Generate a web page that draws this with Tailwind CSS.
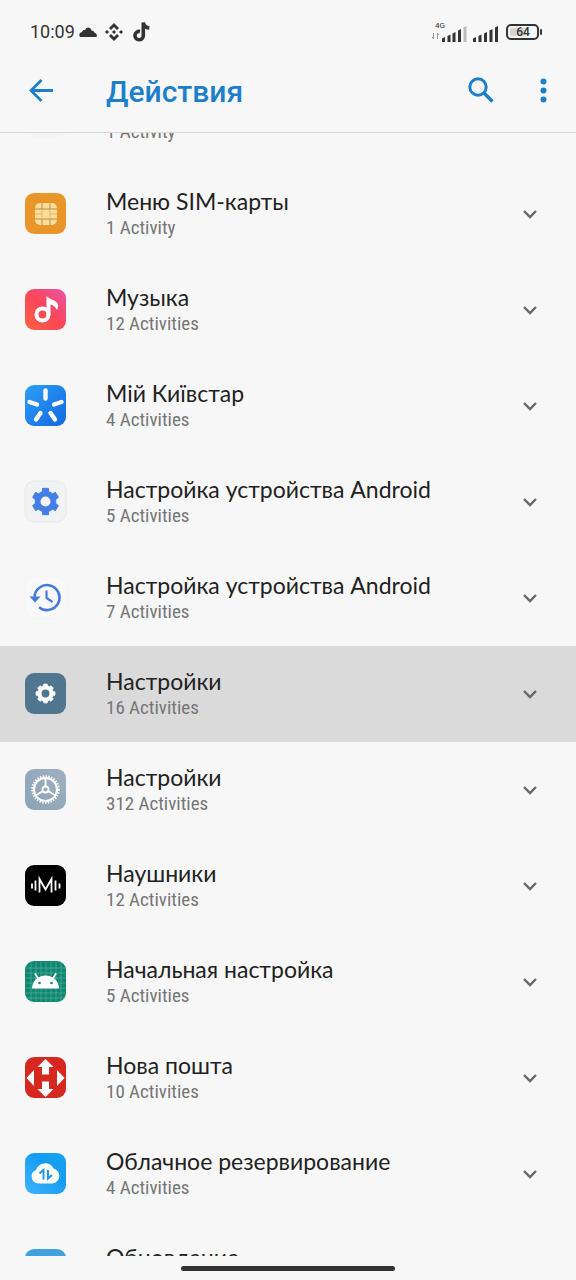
<!DOCTYPE html>
<html lang="ru">
<head>
  <meta charset="UTF-8">
  <meta name="viewport" content="width=device-width,initial-scale=1.0"/>
  <title>Действия</title>
  <script src="https://cdn.jsdelivr.net/npm/@tailwindcss/browser@4"></script>
</head>
<body class="h-screen flex flex-col overflow-hidden bg-[#f7f7f7] font-['Roboto',sans-serif]">

  <!-- Status bar -->
  <div class="h-12 shrink-0 pt-4 pl-[30px] pr-[33px] flex items-center justify-between text-[#333]">
    <div class="flex items-center">
      <span class="text-lg leading-8">10:09</span>
      <svg class="w-[18px] h-[12px] ml-1" viewBox="0 0 18 12" fill="currentColor">
        <path d="M1 11C-.5 9 .6 6.500 3 6c.3-1.600 1.500-2.200 3-2 1.600-3.500 5.500-3.200 6.500.4 1.500 0 2.500.8 2.800 2C17.500 7 18.500 9 17.500 11z"/>
      </svg>
      <svg class="w-[18px] h-[18px] ml-2" viewBox="0 0 18 18" fill="currentColor">
        <path d="M9 0l5 5-2 2-3-3-3 3-2-2zM9 18l5-5-2-2-3 3-3-3-2 2zM9 7l2 2-2 2-2-2zM2 7l2 2-2 2-2-2zM16 7l2 2-2 2-2-2z"/>
      </svg>
      <svg class="w-[18px] h-5 ml-[9px]" viewBox="0 0 18 20" fill="none" stroke="currentColor" stroke-width="3.600">
        <path d="M8 9.500a4.200 4.200 0 1 0 3.300 4.300V0.500c.4 3.200 2.400 5.200 6 5.400"/>
      </svg>
    </div>
    <div class="flex items-center">
      <svg class="w-[35px] h-[22px] overflow-visible" viewBox="0 0 35 22" fill="currentColor">
        <text x="3" y="7" font-size="8">4G</text>
        <path d="M1.500 12v6M0 16l1.500 2M5.500 18v-6M7 14l-1.500-2" stroke="#999" fill="none"/>
        <path d="M10 17.500l3-1.500v5h-3zM15.500 15l3-1.500V21h-3zM20.500 12.500l3-1.500v10h-3zM26 9.500L29 8v13h-3z"/>
        <path d="M31.500 6.500l3-1.500v16h-3z" fill="#bbb"/>
      </svg>
      <svg class="w-[27px] h-[22px] ml-[6px]" viewBox="0 0 27 22" fill="currentColor">
        <path d="M0 17.500l3-1.500v5h-3zM5.500 15l3-1.500V21h-3zM11 12.500l3-1.500v10h-3zM16.500 9.500l3-1.500v13h-3zM22 6.500L25 5v16h-3z"/>
      </svg>
      <svg class="w-[37px] h-4 ml-[6px]" viewBox="0 0 37 16">
        <rect x="1" y="1" width="31" height="14" rx="4" fill="none" stroke="currentColor" stroke-width="2"/>
        <rect x="4" y="4" width="16" height="8" rx="1" fill="#d4d4d4"/>
        <rect x="34" y="5" width="2" height="6" rx="1" fill="currentColor"/>
        <text x="17" y="12" font-size="12" font-weight="500" text-anchor="middle" fill="currentColor">64</text>
      </svg>
    </div>
  </div>

  <!-- App bar -->
  <header class="h-[85px] shrink-0 pl-6 pr-4 flex items-center border-b border-[#d8d8d8] text-[#1d7fc9]">
    <button class="w-[34px]" aria-label="Назад">
      <svg class="w-[34px] h-[34px]" viewBox="0 0 34 34" fill="none" stroke="currentColor" stroke-width="2.800">
        <path d="M29 17.500H8M17.500 7L7 17.500 17.500 28"/>
      </svg>
    </button>
    <h1 class="ml-12 pt-1 flex-1 text-[30px] leading-8 font-medium">Действия</h1>
    <button aria-label="Поиск">
      <svg class="w-[34px] h-[34px]" viewBox="0 0 34 34" fill="none" stroke="currentColor" stroke-width="3">
        <circle cx="14" cy="14" r="8.200"/>
        <path d="M20 20l8.500 8.500" stroke-width="3.600"/>
      </svg>
    </button>
    <button class="ml-[28px]" aria-label="Ещё">
      <svg class="w-[34px] h-[34px]" viewBox="0 0 34 34" fill="currentColor">
        <circle cx="17.500" cy="8.500" r="3"/><circle cx="17.500" cy="17.500" r="3"/><circle cx="17.500" cy="26.500" r="3"/>
      </svg>
    </button>
  </header>

  <!-- App list -->
  <main class="flex-1 min-h-0 overflow-hidden">
    <ul id="app-list" class="-mt-[63px]"></ul>
  </main>

  <!-- Gesture bar -->
  <div class="h-6 shrink-0 pt-[10px]">
    <div class="w-[37%] h-[5px] mx-auto rounded-full bg-[#333]"></div>
  </div>

  <script>
    // ---- ICONS (42x42 tiles) ----
    const tile = fill => `<rect x="0.500" y="0.500" width="41" height="41" rx="9" fill="${fill}"/>`;

    // points of a toothed wheel, used by the settings icons
    function gear(n, outer, inner, share) {
      const pts = [];
      for (let i = 0; i < n; i++) {
        const a = i * 2 * Math.PI / n - Math.PI / 2;
        const h = Math.PI / n;
        [[-h * share * 1.4, inner], [-h * share, outer], [h * share, outer], [h * share * 1.4, inner]].forEach(([d, r]) => {
          pts.push((21 + r * Math.cos(a + d)).toFixed(2) + ',' + (21 + r * Math.sin(a + d)).toFixed(2));
        });
      }
      return pts.join(' ');
    }

    const icons = {
      blank: tile('#f5f5f5'),
      sim: tile('#e8962a') + `
        <rect x="10.500" y="10.500" width="22" height="22" rx="5" fill="#fbdc98"/>
        <path d="M10.500 16.500h7M10.500 26.500h22M25.500 16.500h7M17.500 10.500v6h8v-6M17.500 26.500v6M25.500 26.500v6" stroke="#b98a45" fill="none"/>
        <path d="M10.500 21.500h7M25.500 21.500h7M17.500 16.500v10M25.500 16.500v10" stroke="#e0b56c" fill="none"/>`,
      music: `<defs><linearGradient id="mg" x1="0" y1="1" x2="1" y2="0"><stop stop-color="#fb6340"/><stop offset=".5" stop-color="#fb4658"/><stop offset="1" stop-color="#e754a6"/></linearGradient></defs>` + tile('url(#mg)') + `
        <circle cx="18" cy="26" r="6" fill="none" stroke="#fff" stroke-width="4"/>
        <path d="M22 27V7.500c3.500 3.500 10 4.500 11.300 8 .8 2 .2 4-.8 6-1.500-3-3.500-4.500-6.500-5.500V27z" fill="#fff"/>`,
      star: `<defs><linearGradient id="kg" x1="0" y1="0" x2="1" y2="1"><stop stop-color="#2ba0f5"/><stop offset="1" stop-color="#1467e2"/></linearGradient></defs>` + tile('url(#kg)') + `
        <path d="M21 6v8M5 17.500l7.500 2.500M37 17.500L29.500 20M11.500 35l4.500-6.500M30.500 35L26 28.500" stroke="#fff" stroke-width="4.400" stroke-linecap="round"/>`,
      gearBlue: `<rect x="0.500" y="0.500" width="41" height="41" rx="9" fill="#f1f2f4" stroke="#e7e8ea"/>
        <polygon points="${gear(6, 13.5, 10.5, .42)}" fill="#447ee4" stroke="#447ee4" stroke-linejoin="round"/>
        <circle cx="21" cy="21" r="5" fill="#f3f4f6"/>`,
      history: `<rect x="0.500" y="0.500" width="41" height="41" rx="9" fill="#f9f9f9" stroke="#f5f5f5"/>
        <path d="M10 21a12.500 12.500 0 1 1 4.500 9.700" fill="none" stroke="#447bdc" stroke-width="2.600"/>
        <path d="M5 20h11l-5.500 6z" fill="#447bdc"/>
        <path d="M22 14v7.500l6 4" fill="none" stroke="#447bdc" stroke-width="2.200"/>`,
      gearWhite: tile('#50758f') + `
        <polygon points="${gear(8, 9.5, 7.8, .44)}" fill="#fff" stroke="#fff" stroke-linejoin="round"/>
        <circle cx="21" cy="21" r="3.900" fill="#50758f"/>`,
      wheel: `<defs><linearGradient id="wg" x1="0" y1="1" x2="1" y2="0"><stop stop-color="#8ba4b7"/><stop offset="1" stop-color="#a0afbf"/></linearGradient></defs>` + tile('url(#wg)') + `
        <circle cx="21" cy="21" r="11.500" fill="none" stroke="#fff" stroke-width="2"/>
        <circle cx="21" cy="21" r="13.300" fill="none" stroke="#fff" stroke-width="2" stroke-dasharray="1.500 1.330"/>
        <circle cx="21" cy="21" r="3" fill="none" stroke="#fff" stroke-width="1.800"/>
        <path d="M21 18V9.500M18.500 22.500L11 27M23.500 22.500L31 27" stroke="#fff" stroke-width="2"/>`,
      wave: tile('#000') + `
        <path d="M7.500 19v5M11 16v10M15 28V14.500l6 10.500 6-10.500V28M31 16v10M35 19v5" fill="none" stroke="#fff" stroke-width="1.800"/>`,
      android: tile('#0f8770') + `
        <path d="M6.500 1v40M11.500 1v40M16.500 1v40M21.500 1v40M26.500 1v40M31.500 1v40M36.500 1v40M1 7.500h40M1 12.500h40M1 17.500h40M1 22.500h40M1 27.500h40M1 32.500h40M1 37.500h40" stroke="#5fb5a3" stroke-width=".6"/>
        <path d="M7.500 28a13.500 13 0 0 1 27 0z" fill="#fff"/>
        <path d="M13.500 18l-3-5M28.500 18l3-5" stroke="#fff" stroke-width="1.800"/>
        <circle cx="15" cy="22.500" r="1.300" fill="#0f8770"/><circle cx="27" cy="22.500" r="1.300" fill="#0f8770"/>`,
      post: tile('#d6281f') + `
        <path d="M21 2.500l8 8h-4.500V18h-7v-7.500H13zM21 40.500l8-8h-4.500V25h-7v7.500H13zM2 21.500l7.500-8v16zM40 21.500l-7.500-8v16z" fill="#fff"/>`,
      cloud: `<defs><linearGradient id="cg" x1="0" y1="1" x2="1" y2="0"><stop stop-color="#41b4fa"/><stop offset=".6" stop-color="#149cf2"/><stop offset="1" stop-color="#18a0f0"/></linearGradient></defs>` + tile('url(#cg)') + `
        <path d="M14 31a7 7 0 0 1-2.500-13.500 9.500 9.500 0 0 1 17.500-1.500A7.600 7.600 0 0 1 27.500 31z" fill="#fff"/>
        <path d="M15 21l4-3.500V27M23.500 17.500V26l4-3.500" fill="none" stroke="#2196e8" stroke-width="2"/>`,
      update: tile('#3fa2dc')
    };

    // ---- DATA ----
    const apps = [
      { name: '', count: '1 Activity', icon: 'blank' },
      { name: 'Меню SIM-карты', count: '1 Activity', icon: 'sim' },
      { name: 'Музыка', count: '12 Activities', icon: 'music' },
      { name: 'Мій Київстар', count: '4 Activities', icon: 'star' },
      { name: 'Настройка устройства Android', count: '5 Activities', icon: 'gearBlue' },
      { name: 'Настройка устройства Android', count: '7 Activities', icon: 'history' },
      { name: 'Настройки', count: '16 Activities', icon: 'gearWhite', pressed: true },
      { name: 'Настройки', count: '312 Activities', icon: 'wheel' },
      { name: 'Наушники', count: '12 Activities', icon: 'wave' },
      { name: 'Начальная настройка', count: '5 Activities', icon: 'android' },
      { name: 'Нова пошта', count: '10 Activities', icon: 'post' },
      { name: 'Облачное резервирование', count: '4 Activities', icon: 'cloud' },
      { name: 'Обновление', count: '', icon: 'update' }
    ];

    // ---- RENDER ----
    document.getElementById('app-list').innerHTML = apps.map(app => `
      <li>
        <button class="w-full h-24 pl-6 pr-[34px] flex items-center text-left ${app.pressed ? 'bg-[#dadada]' : ''}">
          <svg class="w-[42px] h-[42px] shrink-0 overflow-visible" viewBox="-0.500 0.500 42 42">${icons[app.icon]}</svg>
          <span class="ml-10 flex-1 min-w-0">
            <span class="block h-7 text-[23px] leading-[26px] text-[#222] font-['Lato',sans-serif]">${app.name}</span>
            <span class="block h-6 text-[19px] leading-6 text-[#757575] font-['Roboto_Condensed','Liberation_Sans_Narrow','Roboto',sans-serif]">${app.count}</span>
          </span>
          <svg class="w-6 h-6 shrink-0 text-[#666]" viewBox="0 0 24 24" fill="none" stroke="currentColor" stroke-width="2.400">
            <path d="M6 9l6 6 6-6"/>
          </svg>
        </button>
      </li>`).join('');
  </script>
</body>
</html>
